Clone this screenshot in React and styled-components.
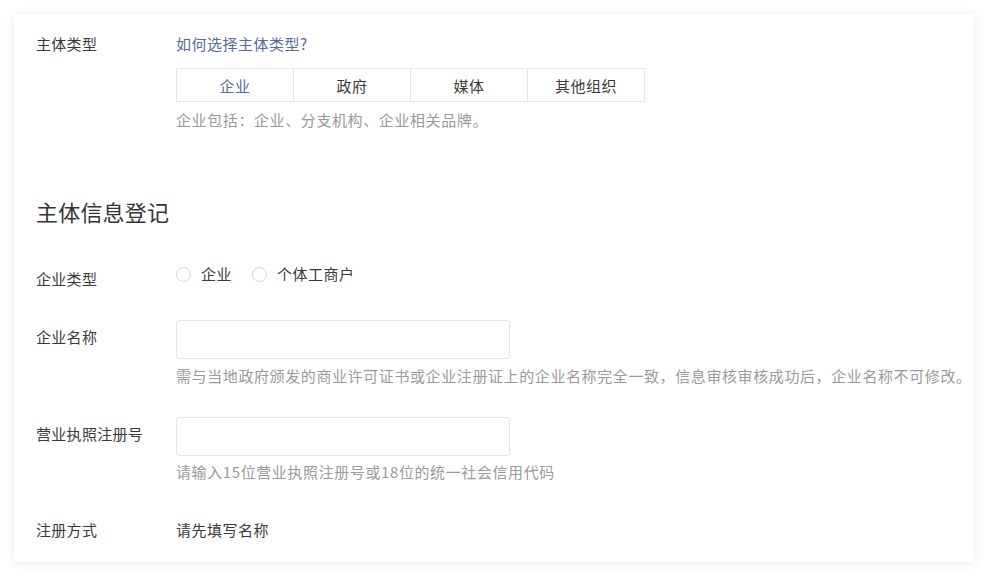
import React, { useState } from "react";
import styled, { createGlobalStyle } from "styled-components";

const GlobalStyle = createGlobalStyle`
  body {
    margin: 0;
    background: #ffffff;
    font-family: "Noto Sans CJK SC", "Liberation Sans", sans-serif;
    color: #353535;
  }
`;

const Page = styled.div`
  padding: 14px;
  width: 988px;
  height: 576px;
  box-sizing: border-box;
`;

const Card = styled.div`
  width: 960px;
  height: 548px;
  box-sizing: border-box;
  background: #fff;
  box-shadow: 0 1px 10px rgba(0, 0, 0, 0.09);
  padding: 20px 0 0 22px;
  display: flex;
  flex-direction: column;
`;

const Row = styled.div`
  display: flex;
  align-items: flex-start;
  margin-top: ${(p) => p.gap || 0}px;
`;

const Label = styled.div`
  width: 140px;
  flex-shrink: 0;
  font-size: 15px;
  letter-spacing: 0.3px;
  line-height: 20px;
  padding-top: ${(p) => p.offset || 0}px;
  color: #3a3a3a;
`;

const Field = styled.div`
  display: flex;
  flex-direction: column;
  align-items: flex-start;
`;

const HelpLink = styled.a`
  font-size: 15px;
  letter-spacing: 0.5px;
  line-height: 20px;
  color: #576b95;
  text-decoration: none;
`;

const Tabs = styled.div`
  display: flex;
  margin-top: 14px;
  border: 1px solid #e7e7e7;
`;

const Tab = styled.div`
  width: 116px;
  height: 32px;
  display: flex;
  align-items: center;
  justify-content: center;
  font-size: 15px;
  letter-spacing: 0.5px;
  color: ${(p) => (p.active ? "#576b95" : "#3a3a3a")};
  cursor: pointer;
  & + & {
    border-left: 1px solid #e7e7e7;
  }
`;

const Hint = styled.div`
  margin-top: ${(p) => p.gap || 8}px;
  font-size: 15px;
  letter-spacing: 0.6px;
  line-height: 20px;
  color: #9a9a9a;
  white-space: nowrap;
`;

const Title = styled.h2`
  margin: 68px 0 0;
  font-size: 22px;
  letter-spacing: 0.2px;
  font-weight: 400;
  line-height: 26px;
  color: #353535;
`;

const Radios = styled.div`
  display: flex;
  gap: 20px;
`;

const Radio = styled.label`
  display: flex;
  align-items: center;
  gap: 10px;
  font-size: 15px;
  letter-spacing: 0.5px;
  line-height: 20px;
  color: #3a3a3a;
  cursor: pointer;
`;

const Circle = styled.span`
  width: 15px;
  height: 15px;
  box-sizing: border-box;
  border-radius: 50%;
  border: 1px solid #d4d4d4;
  background: #fff;
`;

const Input = styled.input`
  width: 334px;
  height: 39px;
  box-sizing: border-box;
  border: 1px solid #e5e5e5;
  border-radius: 3px;
  outline: none;
  padding: 0 10px;
  font-size: 15px;
  font-family: inherit;
`;

const Value = styled.div`
  font-size: 15px;
  letter-spacing: 0.5px;
  line-height: 20px;
  color: #3a3a3a;
`;

const tabs = ["企业", "政府", "媒体", "其他组织"];

export default function App() {
  const [active, setActive] = useState(0);
  return (
    <>
      <GlobalStyle />
      <Page>
        <Card>
          <Row>
            <Label>主体类型</Label>
            <Field>
              <HelpLink href="#">如何选择主体类型?</HelpLink>
              <Tabs>
                {tabs.map((t, i) => (
                  <Tab key={t} active={i === active} onClick={() => setActive(i)}>
                    {t}
                  </Tab>
                ))}
              </Tabs>
              <Hint>企业包括：企业、分支机构、企业相关品牌。</Hint>
            </Field>
          </Row>

          <Title>主体信息登记</Title>

          <Row gap={40}>
            <Label offset={5}>企业类型</Label>
            <Radios>
              <Radio>
                <Circle />
                企业
              </Radio>
              <Radio>
                <Circle />
                个体工商户
              </Radio>
            </Radios>
          </Row>

          <Row gap={31}>
            <Label offset={7}>企业名称</Label>
            <Field>
              <Input />
              <Hint gap={7}>
                需与当地政府颁发的商业许可证书或企业注册证上的企业名称完全一致，信息审核审核成功后，企业名称不可修改。
              </Hint>
            </Field>
          </Row>

          <Row gap={31}>
            <Label offset={7}>营业执照注册号</Label>
            <Field>
              <Input />
              <Hint gap={6}>请输入15位营业执照注册号或18位的统一社会信用代码</Hint>
            </Field>
          </Row>

          <Row gap={38}>
            <Label>注册方式</Label>
            <Value>请先填写名称</Value>
          </Row>
        </Card>
      </Page>
    </>
  );
}
